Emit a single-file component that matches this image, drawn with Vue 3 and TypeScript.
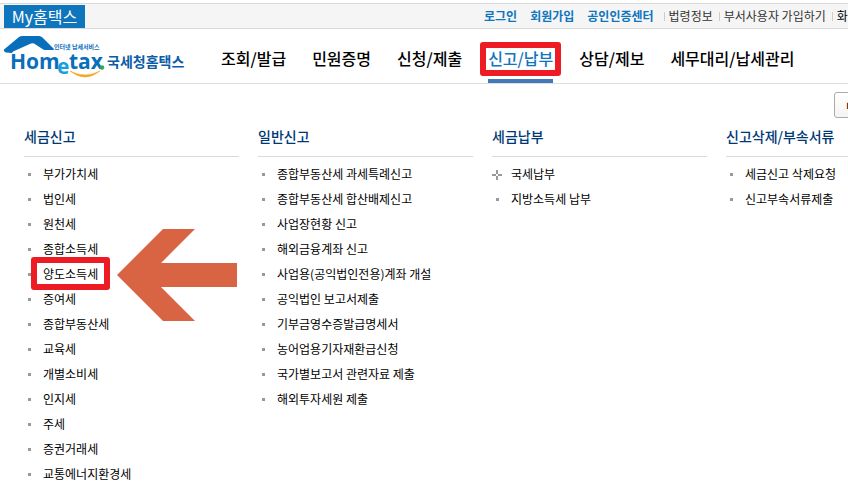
<script setup lang="ts">
interface MenuItem { label: string; expandable?: boolean; marked?: boolean }
interface MenuGroup { title: string; items: MenuItem[] }

const accountLinks: string[] = ['로그인', '회원가입', '공인인증센터']
const utilityLinks: string[] = ['법령정보', '부서사용자 가입하기', '화']

const sections: { label: string; active?: boolean }[] = [
  { label: '조회/발급' },
  { label: '민원증명' },
  { label: '신청/제출' },
  { label: '신고/납부', active: true },
  { label: '상담/제보' },
  { label: '세무대리/납세관리' },
]

const groups: MenuGroup[] = [
  {
    title: '세금신고',
    items: [
      { label: '부가가치세' },
      { label: '법인세' },
      { label: '원천세' },
      { label: '종합소득세' },
      { label: '양도소득세', marked: true },
      { label: '증여세' },
      { label: '종합부동산세' },
      { label: '교육세' },
      { label: '개별소비세' },
      { label: '인지세' },
      { label: '주세' },
      { label: '증권거래세' },
      { label: '교통에너지환경세' },
    ],
  },
  {
    title: '일반신고',
    items: [
      { label: '종합부동산세 과세특례신고' },
      { label: '종합부동산세 합산배제신고' },
      { label: '사업장현황 신고' },
      { label: '해외금융계좌 신고' },
      { label: '사업용(공익법인전용)계좌 개설' },
      { label: '공익법인 보고서제출' },
      { label: '기부금영수증발급명세서' },
      { label: '농어업용기자재환급신청' },
      { label: '국가별보고서 관련자료 제출' },
      { label: '해외투자세원 제출' },
    ],
  },
  {
    title: '세금납부',
    items: [{ label: '국세납부', expandable: true }, { label: '지방소득세 납부' }],
  },
  {
    title: '신고삭제/부속서류',
    items: [{ label: '세금신고 삭제요청' }, { label: '신고부속서류제출' }],
  },
]
</script>

<template>
  <div class="page">
    <div class="topbar">
      <a href="#" class="my">My홈택스</a>
      <nav class="util" aria-label="서비스">
        <a v-for="l in accountLinks" :key="l" href="#" class="account">{{ l }}</a>
        <a v-for="l in utilityLinks" :key="l" href="#" class="plain">{{ l }}</a>
      </nav>
    </div>

    <header class="header">
      <a href="#" class="logo">
        <svg width="188" height="50" viewBox="0 0 188 50">
          <path d="M4 20.500 L19 8 Q20.500 7 22.500 7 L39 7 Q41 7 42.500 8.500 L54 20 Q54.500 21 53 21 L45 21 Q43.500 21 42.500 20 L34 14.500 Q32.500 14 31 14.500 L13 22.500 L12 24 L6 23.500 Q3 22 4 20.500 Z" fill="#0a6fba" />
          <text class="tagline" x="54" y="20">인터넷 납세서비스</text>
          <text class="word" x="10" y="40">Hom</text>
          <text class="word e" x="57" y="45">e</text>
          <text class="word" x="69" y="40">tax</text>
          <circle cx="102" cy="38.500" r="2.200" fill="#2fa84f" />
          <path d="M70 42 Q85 54 100 42 Q85 50 70 42 Z" fill="#f5a623" stroke="#f5a623" stroke-width="0.600" />
          <text class="korean" x="107" y="38">국세청홈택스</text>
        </svg>
      </a>
      <nav class="sections" aria-label="주 메뉴">
        <a v-for="s in sections" :key="s.label" href="#" :class="{ active: s.active }">{{ s.label }}</a>
      </nav>
    </header>

    <main class="mega">
      <button type="button" class="close">ㅁ</button>
      <section v-for="g in groups" :key="g.title" class="group">
        <h2>{{ g.title }}</h2>
        <ul>
          <li v-for="i in g.items" :key="i.label" :class="{ marked: i.marked }">
            <svg v-if="i.expandable" class="plus" width="10" height="10" viewBox="0 0 10 10" aria-hidden="true">
              <path d="M4 0h2v4h-2z M4 6h2v4h-2z M0 4h4v2h-4z M6 4h4v2h-4z" fill="#999" />
            </svg>
            <span v-else class="dot"></span>
            <a href="#">{{ i.label }}</a>
            <svg v-if="i.marked" class="arrow" width="120" height="92" viewBox="0 0 120 92" aria-hidden="true">
              <path d="M0 46 L46 0 H78 L44 34 H120 V58 H44 L78 92 H46 Z" fill="#d96443" />
            </svg>
          </li>
        </ul>
      </section>
    </main>
  </div>
</template>

<style>
body {
  margin: 0;
  background: #fff;
}
</style>

<style scoped>
.page {
  overflow: hidden;
  padding-top: 3px;
  font-family: "Noto Sans CJK KR", "Noto Sans", sans-serif;
  color: #000;
}
a {
  color: inherit;
  text-decoration: none;
  white-space: nowrap;
}
.topbar {
  display: flex;
  align-items: center;
  justify-content: space-between;
  height: 24px;
  padding-left: 4px;
  background: #f5f5f5;
  border-top: 1px solid #d9d9d9;
  border-bottom: 1px solid #d9d9d9;
}
.my {
  align-self: flex-end;
  width: 81px;
  font-size: 16px;
  line-height: 23px;
  text-align: center;
  color: #fff;
  background: #0f75bc;
}
.util {
  display: flex;
  align-items: center;
  width: 364px;
  font-size: 12px;
  line-height: 16px;
}
.account {
  margin-right: 13px;
  font-weight: 700;
  color: #0f75bc;
}
.account:nth-child(3) {
  margin-right: 10px;
}
.plain {
  display: flex;
  align-items: center;
  margin-right: 6px;
  color: #333;
}
.plain:last-child {
  margin-right: 0;
  color: #000;
}
.plain::before {
  content: "";
  width: 1px;
  height: 9px;
  margin-right: 4px;
  background: #ccc;
}
.header {
  display: flex;
  align-items: flex-start;
  height: 54px;
  border-bottom: 1px solid #ddd;
}
.logo {
  width: 188px;
  height: 50px;
}
.logo svg {
  display: block;
}
.tagline {
  font-size: 6px;
  font-weight: 700;
  fill: #0a6fba;
}
.word {
  font-family: "Open Sans", "Noto Sans", sans-serif;
  font-size: 21px;
  font-weight: 700;
  fill: #0a6fba;
}
.e {
  fill: #19a0dc;
}
.korean {
  font-size: 14px;
  font-weight: 700;
  fill: #0b5ca8;
}
.sections {
  display: flex;
  gap: 26px;
  margin-left: 33px;
}
.sections a {
  position: relative;
  height: 50px;
  font-size: 16px;
  font-weight: 500;
  line-height: 58px;
}
.sections .active {
  color: #0f75bc;
  border-bottom: 4px solid #4479b9;
}
.sections .active::after {
  content: "";
  position: absolute;
  inset: 13px -8px 3px;
  border: 6px solid #ed1c24;
  border-radius: 3px;
}
.mega {
  position: relative;
  display: grid;
  grid-template-columns: repeat(4, minmax(215px, 1fr));
  gap: 19px;
  padding: 41px 24px 0;
}
.close {
  position: absolute;
  top: 8px;
  left: 834px;
  width: 80px;
  height: 26px;
  padding: 0 10px;
  font-family: inherit;
  font-size: 12px;
  font-weight: 700;
  text-align: left;
  color: #5a1f1f;
  background: linear-gradient(#fff, #f4f4f4);
  border: 1px solid #aaa;
  border-radius: 3px;
}
h2 {
  margin: 0;
  padding-bottom: 9px;
  font-size: 14px;
  font-weight: 500;
  line-height: 22px;
  color: #003876;
  white-space: nowrap;
  border-bottom: 1px solid #d9d9d9;
}
ul {
  margin: 0;
  padding: 5px 0 0;
  list-style: none;
}
li {
  position: relative;
  display: flex;
  align-items: center;
  height: 25px;
  font-size: 12px;
}
li a {
  padding-bottom: 2px;
  line-height: 22px;
}
.dot {
  width: 3px;
  height: 3px;
  margin: 0 12px 0 4px;
  background: #999;
}
.plus {
  margin-right: 9px;
}
.marked::after {
  content: "";
  position: absolute;
  top: -5px;
  left: 7px;
  width: 67px;
  height: 21px;
  border: 6px solid #ed1c24;
  border-radius: 3px;
}
.arrow {
  position: absolute;
  top: -33px;
  left: 93px;
}
</style>
